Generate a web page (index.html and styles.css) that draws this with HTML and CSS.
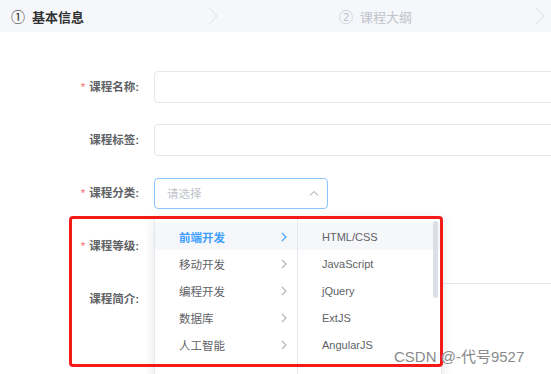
FILE: index.html
```html
<!DOCTYPE html>
<html lang="zh-CN">
<head>
  <meta charset="UTF-8">
  <meta name="viewport" content="width=device-width, initial-scale=1.0">
  <title>添加课程</title>
  <link rel="stylesheet" href="styles.css">
</head>
<body>
  <div class="steps">
    <div class="step active">
      <span class="step-num">①</span>
      <span class="step-title">基本信息</span>
      <svg class="step-arrow" width="10" height="18" viewBox="0 0 10 18"><path d="M1 1 L9 9 L1 17" fill="none" stroke="#dcdfe6" stroke-width="1"/></svg>
    </div>
    <div class="step">
      <span class="step-num">②</span>
      <span class="step-title">课程大纲</span>
      <svg class="step-arrow" width="10" height="18" viewBox="0 0 10 18"><path d="M1 1 L9 9 L1 17" fill="none" stroke="#dcdfe6" stroke-width="1"/></svg>
    </div>
  </div>

  <form class="course-form">
    <div class="form-row">
      <label class="form-label required">课程名称:</label>
      <div class="field"></div>
    </div>
    <div class="form-row">
      <label class="form-label">课程标签:</label>
      <div class="field"></div>
    </div>
    <div class="form-row">
      <label class="form-label required">课程分类:</label>
      <div class="select">
        <span class="placeholder">请选择</span>
        <svg width="10" height="6" viewBox="0 0 10 6"><path d="M1 5.5 L5 1.5 L9 5.5" fill="none" stroke="#c0c4cc" stroke-width="1.2"/></svg>
      </div>
    </div>
    <div class="form-row">
      <label class="form-label required">课程等级:</label>
      <div class="select blank"></div>
    </div>
    <div class="form-row top">
      <label class="form-label">课程简介:</label>
      <div class="field area"></div>
    </div>

    <!-- 级联下拉面板 -->
    <div class="cascader">
      <ul class="menu">
        <li class="menu-item active">前端开发<svg class="chev" width="6" height="10" viewBox="0 0 6 10"><path d="M1 1 L5 5 L1 9" fill="none" stroke="currentColor" stroke-width="1.1"/></svg></li>
        <li class="menu-item">移动开发<svg class="chev" width="6" height="10" viewBox="0 0 6 10"><path d="M1 1 L5 5 L1 9" fill="none" stroke="currentColor" stroke-width="1.1"/></svg></li>
        <li class="menu-item">编程开发<svg class="chev" width="6" height="10" viewBox="0 0 6 10"><path d="M1 1 L5 5 L1 9" fill="none" stroke="currentColor" stroke-width="1.1"/></svg></li>
        <li class="menu-item">数据库<svg class="chev" width="6" height="10" viewBox="0 0 6 10"><path d="M1 1 L5 5 L1 9" fill="none" stroke="currentColor" stroke-width="1.1"/></svg></li>
        <li class="menu-item">人工智能<svg class="chev" width="6" height="10" viewBox="0 0 6 10"><path d="M1 1 L5 5 L1 9" fill="none" stroke="currentColor" stroke-width="1.1"/></svg></li>
      </ul>
      <ul class="menu sub">
        <li class="menu-item hover">HTML/CSS</li>
        <li class="menu-item">JavaScript</li>
        <li class="menu-item">jQuery</li>
        <li class="menu-item">ExtJS</li>
        <li class="menu-item">AngularJS</li>
      </ul>
      <div class="scrollbar"></div>
    </div>
  </form>

  <div class="mark"></div>
  <div class="watermark">CSDN @-代号9527</div>
</body>
</html>
```

FILE: styles.css
```css
body {
  margin: 0;
  font-family: "Liberation Sans", "Noto Sans CJK SC", sans-serif;
  font-size: 12px;
  color: #606266;
  background-color: white;
  overflow: hidden;
  height: 374px;
  position: relative;
}

.steps {
  display: flex;
  height: 32px;
  background-color: #f5f7fa;
  font-size: 13px;
}

.step {
  display: flex;
  align-items: center;
  color: #c0c4cc;
  width: 207px;
  padding-left: 11px;
}

.step + .step {
  width: 206px;
  padding-left: 121px;
}

.step.active {
  color: #303133;
  font-weight: bold;
}

.step-num {
  font-size: 14px;
  margin-right: 7px;
  font-weight: normal;
}

.step-title {
  flex: 1;
}

.course-form {
  padding-top: 39px;
}

.form-row {
  display: flex;
  align-items: center;
  margin-bottom: 21px;
}

.form-row.top {
  align-items: flex-start;
}

.form-label {
  flex-shrink: 0;
  width: 139px;
  padding-right: 15px;
  text-align: right;
  font-size: 11.5px;
  font-weight: bold;
  line-height: 32px;
}

.form-label.required::before {
  content: "*";
  color: #f56c6c;
  margin-right: 4px;
  font-weight: normal;
}

.field {
  width: 420px;
  height: 30px;
  border: 1px solid #e4e7ed;
  border-radius: 4px;
  flex-shrink: 0;
}

.field.area {
  height: 90px;
}

.select {
  width: 152px;
  height: 29px;
  border: 1px solid #8cc5ff;
  border-radius: 4px;
  display: flex;
  align-items: center;
  justify-content: space-between;
  padding: 0 8px 0 12px;
}

.select.blank {
  border-color: #e4e7ed;
}

.placeholder {
  color: #c0c4cc;
  font-size: 11.5px;
}

.cascader {
  position: absolute;
  left: 154px;
  top: 217px;
  display: flex;
  background-color: white;
  border: 1px solid #e4e7ed;
  box-shadow: 0 2px 12px rgba(0, 0, 0, 0.1);
}

.menu {
  list-style: none;
  margin: 0;
  padding: 5px 0;
  width: 142px;
  height: 200px;
  border-right: 1px solid #e4e7ed;
  font-size: 11.5px;
}

.menu.sub {
  width: 143px;
  border-right: none;
  font-size: 11px;
}

.menu-item {
  height: 27px;
  padding-left: 24px;
  padding-right: 10px;
  display: flex;
  align-items: center;
  justify-content: space-between;
}

.menu-item.active {
  color: #409eff;
  font-weight: bold;
  background-color: #f5f7fa;
}

.menu-item.hover {
  background-color: #f5f7fa;
}

.chev {
  color: #b0b3b8;
}

.menu-item.active .chev {
  color: #409eff;
}

.scrollbar {
  position: absolute;
  left: 278px;
  top: 3px;
  width: 5px;
  height: 77px;
  border-radius: 3px;
  background-color: #dcdfe6;
}

.mark {
  position: absolute;
  left: 69px;
  top: 216px;
  width: 368px;
  height: 145px;
  border: 3px solid #f5191a;
  border-radius: 4px;
}

.watermark {
  position: absolute;
  left: 394px;
  top: 345px;
  font-size: 15px;
  color: #8a8a8a;
}
```
